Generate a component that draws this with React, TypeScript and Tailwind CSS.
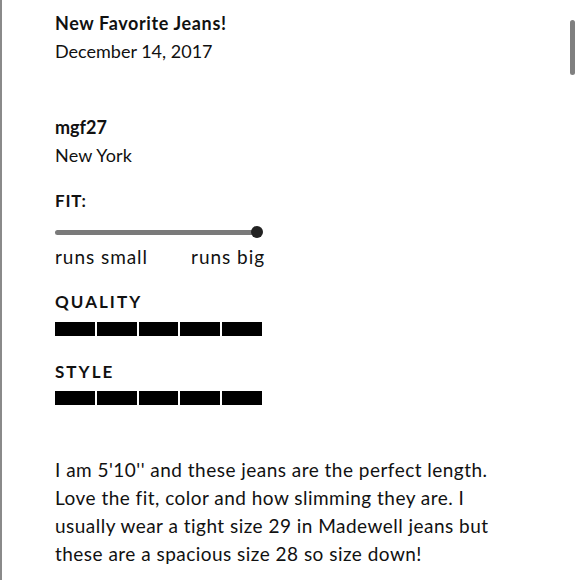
import React from 'react';

const Bars = () => (
  <div className="flex gap-[2px] w-[207px] h-[14px]">
    {[1, 2, 3, 4, 5].map((i) => (
      <div key={i} className="flex-1 bg-black" />
    ))}
  </div>
);

export default function App() {
  return (
    <div
      className="relative w-[580px] h-[580px] overflow-hidden bg-white border-l-2 border-[#8a8a8a] text-[#111]"
      style={{ fontFamily: 'Lato, "Open Sans", sans-serif' }}
    >
      <div className="pl-[53px] pt-[9px] text-[18px] leading-[28px]">
        <div className="font-bold tracking-[0.035em]">New Favorite Jeans!</div>
        <div>December 14, 2017</div>

        <div className="mt-[48px] font-bold">mgf27</div>
        <div className="tracking-[0.01em]">New York</div>

        <div className="mt-[18px] text-[17px] font-bold tracking-wider">FIT:</div>
        <div className="mt-[11px] relative w-[208px] h-[12px] flex items-center">
          <div className="w-[200px] h-[5px] rounded-full bg-[#7a7a7a]" />
          <div className="absolute right-0 top-0 w-[12px] h-[12px] rounded-full bg-[#222]" />
        </div>
        <div className="mt-[5px] flex justify-between w-[210px] text-[19px] tracking-[0.05em]">
          <span>runs small</span>
          <span>runs big</span>
        </div>

        <div className="mt-[17px] text-[17px] font-bold tracking-[0.12em]">QUALITY</div>
        <div className="mt-[6px]">
          <Bars />
        </div>

        <div className="mt-[22px] text-[17px] font-bold tracking-[0.12em]">STYLE</div>
        <div className="mt-[5px]">
          <Bars />
        </div>

        <p className="mt-[51px] w-[464px] text-[19px] tracking-[0.025em]">
          I am 5'10'' and these jeans are the perfect length. Love the fit, color and how slimming they are. I
          usually wear a tight size 29 in Madewell jeans but these are a spacious size 28 so size down!
        </p>
      </div>

      <div className="absolute left-[568px] top-[20px] w-[5px] h-[55px] rounded-full bg-[#808080]" />
    </div>
  );
}
